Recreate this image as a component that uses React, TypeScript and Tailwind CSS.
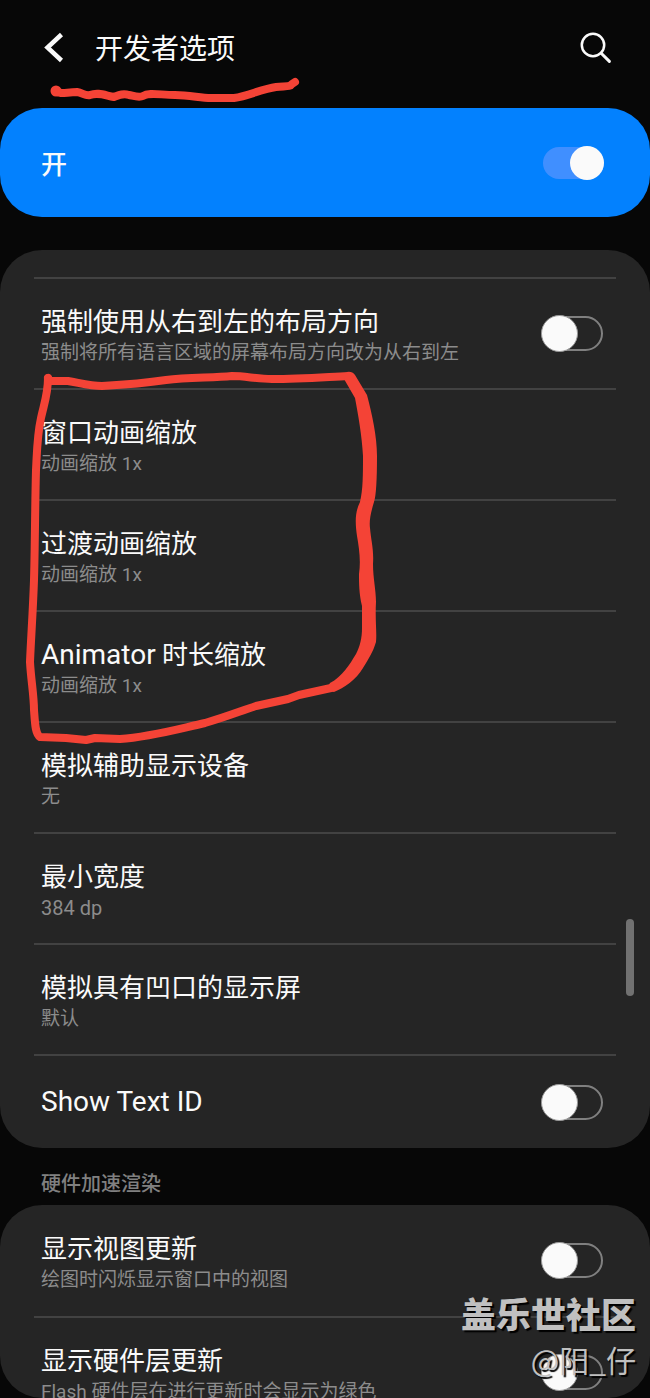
import { useId, useState } from 'react';

interface Option {
  title: string;
  summary?: string;
  toggle?: boolean;
}

const drawingOptions: Option[] = [
  { title: '强制使用从右到左的布局方向', summary: '强制将所有语言区域的屏幕布局方向改为从右到左', toggle: true },
  { title: '窗口动画缩放', summary: '动画缩放 1x' },
  { title: '过渡动画缩放', summary: '动画缩放 1x' },
  { title: 'Animator 时长缩放', summary: '动画缩放 1x' },
  { title: '模拟辅助显示设备', summary: '无' },
  { title: '最小宽度', summary: '384 dp' },
  { title: '模拟具有凹口的显示屏', summary: '默认' },
  { title: 'Show Text ID', toggle: true },
];

const renderingOptions: Option[] = [
  { title: '显示视图更新', summary: '绘图时闪烁显示窗口中的视图', toggle: true },
  { title: '显示硬件层更新', summary: 'Flash 硬件层在进行更新时会显示为绿色', toggle: true },
];

function Switch({ id, initial = false }: { id: string; initial?: boolean }) {
  const [on, setOn] = useState(initial);

  return (
    <input
      id={id}
      type="checkbox"
      role="switch"
      checked={on}
      onChange={e => setOn(e.target.checked)}
      className={
        on
          ? "relative h-8 w-[61px] shrink-0 cursor-pointer appearance-none rounded-full bg-[#408fff] before:absolute before:-top-px before:right-0 before:size-[34px] before:rounded-full before:bg-[#fafafa] before:content-['']"
          : "relative h-[35px] w-[61px] shrink-0 cursor-pointer appearance-none rounded-full border-2 border-[#808080] before:absolute before:-top-[3px] before:-left-[3px] before:size-[37px] before:rounded-full before:border before:border-[#9a9a9a] before:bg-[#fafafa] before:content-['']"
      }
    />
  );
}

// latin letters are set a little larger than the CJK glyphs beside them
function OptionText({ option }: { option: Option }) {
  const parts = option.title.split(/([A-Za-z]+(?: [A-Za-z]+)*)/).filter(Boolean);
  const latinSummary = /^[\w ]+$/.test(option.summary ?? '');

  return (
    <>
      <span className="block text-[26px] leading-[34px] text-[#fafafa]">
        {parts.map(part => (/^[A-Za-z]/.test(part) ? <span key={part} className="text-[28px]">{part}</span> : part))}
      </span>
      {option.summary && (
        <span className={`block leading-7 whitespace-nowrap text-[#8c8c8c] ${latinSummary ? 'text-[20px]' : 'text-[19px]'}`}>
          {option.summary}
        </span>
      )}
    </>
  );
}

function OptionRow({ option }: { option: Option }) {
  const id = useId();
  const height = option.summary ? 'h-[111px]' : 'h-[94px]';
  const pad = option.summary ? 'pt-1' : '';

  return (
    <li className={`${height} shrink-0 border-t-2 border-[#424242] pr-[13px] pl-[7px]`}>
      {option.toggle ? (
        <div className="flex h-full items-center justify-between">
          <label htmlFor={id} className={`cursor-pointer ${pad}`}>
            <OptionText option={option} />
          </label>
          <Switch id={id} />
        </div>
      ) : (
        <button type="button" className={`flex h-full w-full cursor-pointer flex-col items-start justify-center text-left ${pad}`}>
          <OptionText option={option} />
        </button>
      )}
    </li>
  );
}

// red pen strokes drawn over the list
function PenMarks() {
  return (
    <svg className="pointer-events-none absolute top-0 left-0" width="400" height="760" viewBox="0 0 400 760" fill="none" aria-hidden="true">
      <g stroke="#f44336" strokeLinecap="round" strokeLinejoin="round">
        <path strokeWidth="8" d="M56 91 C60 95 66 92 77 92 C83 93 85 96 90 95 C98 92 104 95 114 97 C119 95 123 93 129 95 C134 96 139 98 143 96 C149 92 160 95 175 95 C190 95 200 98 211 98 L234 98 C248 96 262 89 276 87 C286 86 290 87 292 84 L295 82" />
        <circle cx="56" cy="91" r="2" strokeWidth="7" />
        <path strokeWidth="8" d="M48 378 L50 381 L68 381 C80 383 90 386 102 386 C120 385 146 383 166 380 C188 377 212 378 232 376 C246 376 256 379 272 379 C300 379 326 377 348 376" />
        <path strokeWidth="8" d="M48 378 C48 394 44 404 41 418 C37 436 37 452 36 470 C35 506 35 546 34 580 C33 610 31 638 30 662 C31 680 34 696 34 710 C35 722 35 734 40 737 L66 738 L86 740 L95 738 L120 739 C150 737 178 729 205 723 C226 717 238 712 256 706 L288 699 L299 695 L331 688" />
      </g>
      <path
        fill="#f44336"
        d="M347 372 Q352 371 355 375 L367 395 C372 414 377 436 377 456 C377 480 376 496 374 502 C371 512 369 520 370 528 C371 540 374 550 373 564 C373 578 376 590 376 602 C375 620 377 632 376 642 C373 652 369 658 363 668 C356 680 344 688 334 692 L326 690 L330 683 C342 677 350 664 356 654 C360 646 362 638 362 628 L362 606 C359 594 359 582 359 574 C361 560 359 548 357 536 C355 522 355 512 360 502 C363 490 363 474 363 456 C362 436 358 414 355 398 L344 379 Z"
      />
    </svg>
  );
}

export default function App() {
  const masterId = useId();

  return (
    <div className="relative flex h-screen flex-col overflow-hidden bg-[#070707] font-['Roboto','Noto_Sans_CJK_SC',sans-serif]">
      <header className="flex h-[108px] shrink-0 items-center pr-[38px] pb-3 pl-[42px]">
        <button type="button" aria-label="返回" className="cursor-pointer text-[#fafafa]">
          <svg width="24" height="32" viewBox="0 0 24 32" fill="none" stroke="currentColor" strokeWidth="4.5">
            <path d="M19.5 2.5 L5.5 15.5 L19.5 28.5" />
          </svg>
        </button>
        <h1 className="ml-[29px] flex-1 pt-1 text-[28px] leading-9 text-[#fafafa]">开发者选项</h1>
        <button type="button" aria-label="搜索" className="cursor-pointer text-[#fafafa]">
          <svg width="32" height="32" viewBox="0 0 32 32" fill="none" stroke="currentColor" strokeWidth="2.5" strokeLinecap="round">
            <circle cx="13" cy="13" r="11.2" />
            <path d="M21.2 21.2 L29.4 29.4" strokeWidth="3" />
          </svg>
        </button>
      </header>

      <div className="flex h-[109px] shrink-0 items-center justify-between rounded-[42px] bg-[#0381fe] pr-[46px] pl-[41px]">
        <label htmlFor={masterId} className="cursor-pointer pt-1 text-[26px] leading-9 font-medium text-[#fafafa]">开</label>
        <Switch id={masterId} initial />
      </div>

      <main className="mt-[33px] flex min-h-0 flex-1 flex-col">
        <ul className="shrink-0 rounded-[42px] bg-[#252525] px-[34px] pt-[27px]">
          {drawingOptions.map(o => <OptionRow key={o.title} option={o} />)}
        </ul>
        <h2 className="shrink-0 px-[41px] pt-[22px] pb-[7px] text-[20px] leading-7 font-medium text-[#808080]">硬件加速渲染</h2>
        <ul className="flex min-h-0 flex-1 flex-col overflow-hidden rounded-[42px] bg-[#252525] px-[34px] *:first:border-t-0">
          {renderingOptions.map(o => <OptionRow key={o.title} option={o} />)}
        </ul>
      </main>

      <div className="absolute top-[919px] right-4 h-[77px] w-2 rounded-full bg-[#717171]" />
      <PenMarks />
      <div className="pointer-events-none absolute right-3.5 bottom-4 text-right font-['Noto_Sans_CJK_SC',sans-serif] text-[#c0c0c0] [text-shadow:2px_2px_1px_#000000]">
        <p className="text-[35px] leading-[46px] font-black">盖乐世社区</p>
        <p className="text-[30px] leading-[46px]">@阳_仔</p>
      </div>
    </div>
  );
}
